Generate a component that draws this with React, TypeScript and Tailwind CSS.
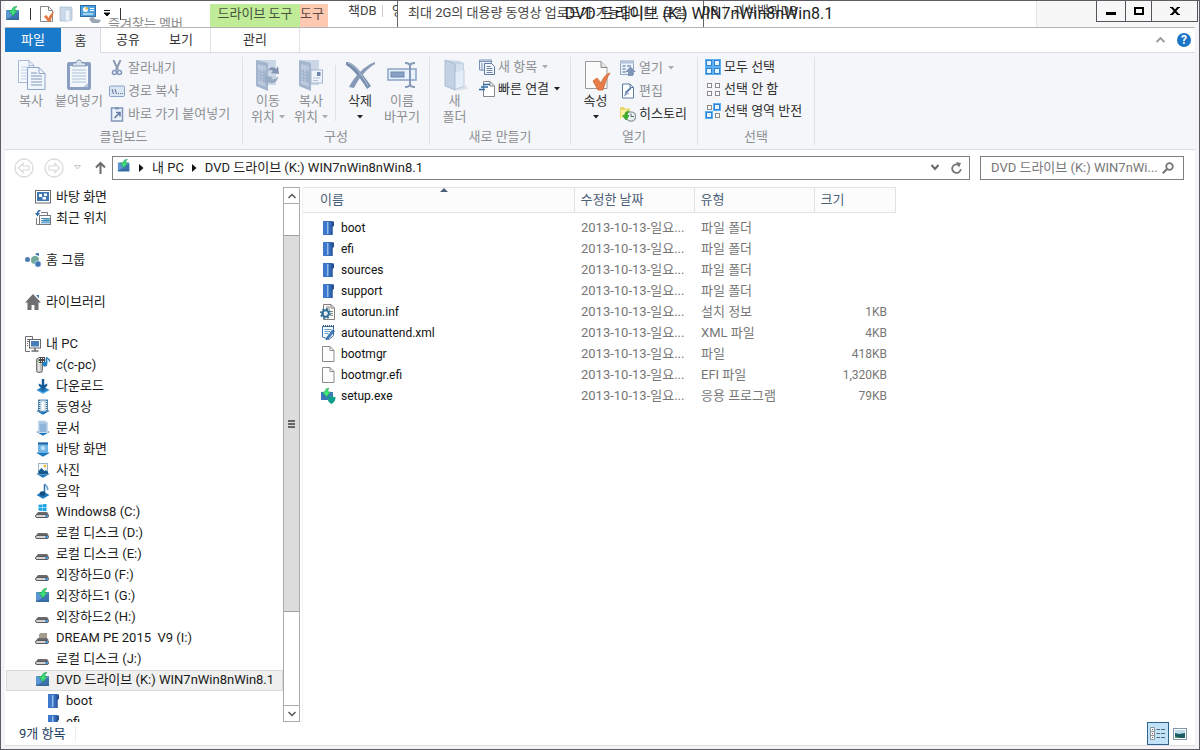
import type { ReactNode } from "react";

/* ---------- small icons ---------- */

const DiscDrive = ({ size = 16 }: { size?: number }) => (
  <svg width={size} height={size} viewBox="0 0 16 16" aria-hidden="true">
    <rect x="1" y="4" width="13" height="10" fill="#5a96d2" />
    <path d="M1 14 14 5v9z" fill="#3d74b0" />
    <rect x="1" y="12.500" width="13" height="1.500" fill="#34648f" opacity=".6" />
    <path d="M12 .5C8.500 .5 7 2 7 4.500H4l4 5.500 4-5.500H9.800c0-1.500.5-3 2.200-4z" fill="#3fe07a" stroke="#1f9c52" strokeWidth=".7" />
  </svg>
);

const Shielded = () => (
  <svg width="16" height="16" viewBox="0 0 16 16" aria-hidden="true">
    <rect x="1" y="4" width="12" height="8" fill="#3f78b8" />
    <path d="M9 0C6 0 5 2 5 4H2.500l4 5 4-5H8c0-2 0-3 1-4z" fill="#46e67c" stroke="#1f9c52" strokeWidth=".6" />
    <path d="M7.500 9c2 0 3-.5 4-1 1 .5 2 1 4 1 0 4-1.500 5.500-4 7-2.500-1.500-4-3-4-7z" fill="#11a08a" />
  </svg>
);

const Folder = () => (
  <svg width="16" height="16" viewBox="0 0 16 16" aria-hidden="true">
    <rect x="3" y="1" width="9.500" height="14" fill="#3468b8" />
    <rect x="3" y="1" width="4" height="14" fill="#3d78cc" />
    <rect x="7" y="2" width="1.500" height="12" fill="#93bdea" />
    <path d="M11.500 1.500H14V6l-1.500 1v8h-1z" fill="#264f90" />
  </svg>
);

const Page = () => (
  <svg width="16" height="16" viewBox="0 0 16 16" aria-hidden="true">
    <path d="M2.500.5h7.500l4 4v11H2.500z M10 .5v4h4" fill="#fdfdfd" stroke="#8c8c8c" />
  </svg>
);

const InfFile = () => (
  <svg width="16" height="16" viewBox="0 0 16 16" aria-hidden="true">
    <path d="M3.500.5H11l3.500 3.500v11.500h-11z M11 .5V4h3.500" fill="#fafafa" stroke="#808080" />
    <path d="M6 3h4M6 5h4M10 7.500h3M10.500 9.500H13M10.500 11.500H13" stroke="#8a8a8a" />
    <circle cx="5.500" cy="9.500" r="3.300" fill="none" stroke="#2c6c93" strokeWidth="2" />
    <circle cx="5.500" cy="9.500" r="4.800" fill="none" stroke="#2c6c93" strokeWidth="1.400" strokeDasharray="1.800 1.970" />
    <circle cx="5.500" cy="9.500" r="1.200" fill="#d8edf7" />
  </svg>
);

const XmlFile = () => (
  <svg width="16" height="16" viewBox="0 0 16 16" aria-hidden="true">
    <path d="M2.500 1.500h11v9L9 14.500 2.500 12z" fill="#f5faff" stroke="#3a6fa8" />
    <path d="M3 1h11" stroke="#355f8c" strokeWidth="2" strokeDasharray="1 1" />
    <path d="M4.500 4.500h7M4.500 6.500h6M4.500 8.500h4" stroke="#6b9cc8" />
    <path d="M14.500 6 9 13l-3 2 1-3 5.500-7z" fill="#3d7fc4" stroke="#245382" strokeWidth=".6" />
  </svg>
);

const DesktopFav = () => (
  <svg width="16" height="16" viewBox="0 0 16 16" aria-hidden="true">
    <rect x=".5" y="1.500" width="15" height="12.500" fill="#fff" stroke="#6b6b70" />
    <rect x="2" y="3" width="12" height="9" fill="#3e76b0" />
    <path d="M4 5h3v3H4zM9 4.500h3V7H9zM7.500 8H11v2.500H7.500z" fill="#fff" />
  </svg>
);

const Recent = () => (
  <svg width="16" height="16" viewBox="0 0 16 16" aria-hidden="true">
    <path d="M6 2.500h6.500V5M1.500 8v6.500H4" fill="none" stroke="#77777c" />
    <rect x="4.500" y="5.500" width="11" height="9" fill="#fff" stroke="#77777c" />
    <path d="M6 12.500 9 9l6-1v5.500H6z" fill="#79b3d6" />
    <path d="M6 8.500h8M6 10.500h8" stroke="#4b89b5" />
    <path d="M5.500.5C3.500.5 2.500 1.500 2.500 3.500" fill="none" stroke="#2e6cad" strokeWidth="1.500" />
    <path d="M0 3h5L2.500 6.500z" fill="#2e6cad" />
  </svg>
);

const HomeGroup = () => (
  <svg width="16" height="16" viewBox="0 0 16 16" aria-hidden="true">
    <circle cx="2.500" cy="7.500" r="2.500" fill="#4a7db2" />
    <circle cx="10" cy="8" r="4" fill="#72a99b" />
    <path d="M10 2.500 11.500 1h2.500v3z" fill="#4a7db2" />
    <circle cx="13" cy="12" r="3.200" fill="#3f77b5" stroke="#fff" strokeWidth=".6" />
  </svg>
);

const House = () => (
  <svg width="16" height="16" viewBox="0 0 16 16" aria-hidden="true">
    <path d="M8 0 0 8.500h2.500V16h4v-5h3v5h4V8.500H16z" fill="#6f6f72" />
    <path d="M11 1h3v3.500z" fill="#3f77b5" />
  </svg>
);

const ThisPc = () => (
  <svg width="16" height="16" viewBox="0 0 16 16" aria-hidden="true">
    <path d="M5 15.500H.5V.5h7V3M2 3.500h4M2 5.500h2M2 7.500h1M2 9.500h1" fill="none" stroke="#707075" />
    <rect x="4.500" y="3.500" width="11" height="8.500" fill="#fff" stroke="#68686d" />
    <rect x="6" y="5" width="8" height="5.500" fill="#4580b8" />
    <path d="M10 12v2.500M6.500 15h7" stroke="#68686d" strokeWidth="1.500" />
  </svg>
);

const MediaPc = () => (
  <svg width="16" height="16" viewBox="0 0 16 16" aria-hidden="true">
    <rect x="1.500" y="1" width="6" height="14.500" rx="2" fill="#bcbcbc" stroke="#747474" />
    <path d="M4 5v9" stroke="#ededed" strokeWidth="1.500" />
    <circle cx="4" cy="3.500" r="1" fill="#58b040" />
    <path d="M4 0h6v6H4z" fill="#4b4b4b" />
    <path d="M4 1.500h6M4 4.500h6" stroke="#eee" strokeDasharray="1 1" />
    <path d="M12 0v7a2.200 2 0 1 1-1-1.500V2zM12 1c3 1 3 2 2.500 4" fill="#2180c4" stroke="#2180c4" strokeWidth=".8" />
  </svg>
);

const Base = () => <path d="M1.500 12 8 8.500l6.500 3.500L8 15.800z" fill="#1d77bc" />;

const Download = () => (
  <svg width="16" height="16" viewBox="0 0 16 16" aria-hidden="true">
    <Base />
    <path d="M6.800 1h2.400v6l3-1.500v2.300L8 12 3.800 7.800V5.500l3 1.500z" fill="#145a94" />
    <path d="M3 12.500 8 15l5-2.500" fill="none" stroke="#5fb8ee" />
  </svg>
);
const Video = () => (
  <svg width="16" height="16" viewBox="0 0 16 16" aria-hidden="true">
    <Base />
    <rect x="3.500" y="1" width="9" height="11.500" fill="#e8f3fb" stroke="#5b8fb8" />
    <path d="M4.500 1v12M11.500 1v12" stroke="#38648a" strokeWidth="1.500" strokeDasharray="1 1" />
    <rect x="6" y="2" width="4" height="10" fill="#fff" stroke="#88adc8" strokeWidth=".6" />
  </svg>
);
const Docs = () => (
  <svg width="16" height="16" viewBox="0 0 16 16" aria-hidden="true">
    <Base />
    <path d="M3.500 1h7l2 2v9.500h-9z" fill="#a8c7e3" stroke="#c4daec" />
    <path d="M5 4h6v8H5z" fill="#8fb5d8" />
  </svg>
);
const Desktop = () => (
  <svg width="16" height="16" viewBox="0 0 16 16" aria-hidden="true">
    <Base />
    <rect x="3" y="1.500" width="10" height="10.500" fill="#6eb3e6" />
    <rect x="3" y="1.500" width="10" height="2" fill="#2566a4" />
    <circle cx="8" cy="7" r="2.500" fill="#a9d6f5" />
    <path d="M7 6.500 8.500 8" stroke="#fff" />
  </svg>
);
const Pictures = () => (
  <svg width="16" height="16" viewBox="0 0 16 16" aria-hidden="true">
    <Base />
    <rect x="3.500" y="1.500" width="9" height="10.500" fill="#f7fbff" stroke="#9bb4c8" />
    <circle cx="10" cy="4" r="1.500" fill="#f0c23c" />
    <path d="M3.500 12V9L6.500 6l3 3 1.500-1 2 2v2z" fill="#155b8f" />
  </svg>
);
const Music = () => (
  <svg width="16" height="16" viewBox="0 0 16 16" aria-hidden="true">
    <Base />
    <path d="M9.500 1v9" stroke="#2b6fae" strokeWidth="1.500" />
    <path d="M10 1c.5 2 3.500 2.500 2.500 6" fill="none" stroke="#5f9bce" strokeWidth="1.500" />
    <ellipse cx="7.500" cy="10.500" rx="2.800" ry="2.300" fill="#124f82" />
  </svg>
);

const HardDisk = ({ windows = false, card = false }: { windows?: boolean; card?: boolean }) => (
  <svg width="16" height="16" viewBox="0 0 16 16" aria-hidden="true">
    {windows && <path d="M3.500.8 7 .4v3H3.500zM7.500.3l4-.3v3.400h-4zM3.500 3.900H7v3l-3.500-.4zM7.500 3.900h4v3.400l-4-.4z" fill="#1ba4e4" />}
    {card && <path d="M5 3h7v5H4V5z" fill="#a39b8c" />}
    <path d="M3 8h9l2 2.500H1z" fill="#6a6a6c" />
    <rect x=".5" y="10.500" width="13" height="3" rx="1.500" fill="#d3d3d4" stroke="#5b5b5d" />
    <rect x="10.500" y="11" width="2" height="2" fill="#1d86d6" />
  </svg>
);

/* ---------- ribbon icons ---------- */

const CopyBig = () => (
  <svg width="32" height="32" viewBox="0 0 32 32" aria-hidden="true">
    <path d="M3.500 1.500H14l5 5v17H3.500z M14 1.500v5h5" fill="#f5f9ff" stroke="#a5b9d6" />
    <path d="M6 8h9M6 11h9M6 14h6M6 17h6M6 20h6" stroke="#c0d0e6" />
    <path d="M12.500 8.500H24l6 6v16H12.500z M24 8.500v6h6" fill="#f1f6fd" stroke="#8fa6c8" />
    <path d="M16 14h6M16 17h11M16 20h11M16 23h11M16 26h11" stroke="#8298b8" />
  </svg>
);
const PasteBig = () => (
  <svg width="32" height="32" viewBox="0 0 32 32" aria-hidden="true">
    <rect x="4" y="3" width="24" height="28" rx="2" fill="#8a9fc2" />
    <path d="M7 7h18v21H7z" fill="#f3f7fc" />
    <path d="M9 11h14M9 14h14M9 17h14M9 20h14M9 23h14" stroke="#adc0d8" />
    <path d="M10 4h3c0-4 6-4 6 0h3l1 3H9z" fill="#d8e2ee" stroke="#8497b2" />
    <path d="M20 28l5-4v4z" fill="#bccbdc" />
  </svg>
);
const Scissors = () => (
  <svg width="16" height="16" viewBox="0 0 16 16" aria-hidden="true">
    <path d="M4.500 0l4.500 10M11.500 0 7 10" stroke="#8a9ab3" strokeWidth="2" fill="none" />
    <circle cx="5.500" cy="12.500" r="2" fill="none" stroke="#8499bb" strokeWidth="1.600" />
    <circle cx="10.500" cy="12.500" r="2" fill="none" stroke="#8499bb" strokeWidth="1.600" />
  </svg>
);
const PathIcon = () => (
  <svg width="16" height="16" viewBox="0 0 16 16" aria-hidden="true">
    <rect x=".5" y="3" width="15" height="10.500" rx="1" fill="#dbe6f4" stroke="#8ba2c4" />
    <path d="M3 6l1.500 5M6 6l1.500 5M9 10.500h1M11 10.500h1M13 10.500h1" stroke="#5d7396" />
  </svg>
);
const ShortcutPaste = () => (
  <svg width="16" height="16" viewBox="0 0 16 16" aria-hidden="true">
    <rect x="2.500" y="2" width="11" height="13" fill="#edf3fb" stroke="#8098bd" strokeWidth="1.500" />
    <path d="M6 1h4v2.500H6z" fill="#8298b8" />
    <path d="M7 6.500h4v4M11 6.500 5.500 12" stroke="#647ca2" strokeWidth="1.600" fill="none" />
  </svg>
);
const LocationBig = ({ copy = false }: { copy?: boolean }) => (
  <svg width="32" height="34" viewBox="0 0 32 34" aria-hidden="true">
    <path d="M4 2h20v25H4z" fill="#cbd7e7" />
    <path d="M4 2l12 3v28L4 28z" fill="#a3b4cd" />
    <path d="M6 6l8 2v5l-8-2zM6 22l8 3v4l-8-3z" fill="#b9c7da" />
    <path d="M7 8v17M10 9v17" stroke="#c8d4e4" strokeDasharray="2 1" />
    {copy ? (
      <g>
        <rect x="16" y="12" width="11.500" height="13" fill="#eef3fa" stroke="#a7b7ce" />
        <rect x="22" y="14" width="3.500" height="4" fill="#6f87ad" />
        <path d="M18 20h7M18 22.500h5" stroke="#b6c4d8" />
      </g>
    ) : (
      <g>
        <path d="M16 13c1-4 5-5 8-2l2-3 1 8-8-1 2-2c-2-1.500-4-1-5 0z" fill="#8395b3" />
        <path d="M26 18c0 6-5 9-10 6l-2 3-1-9 8 1-2 2c3 1 5-.500 7-3z" fill="#98aac4" />
      </g>
    )}
  </svg>
);
const DeleteBig = () => (
  <svg width="32" height="32" viewBox="0 0 32 32" aria-hidden="true">
    <path d="M2 3c7-1 16 11 25 24l-4 3C17 20 10 11 2 6z" fill="#788eae" />
    <path d="M31 3C20 7 10 18 5 28l5 1C15 19 22 10 31 5z" fill="#8699b7" />
    <path d="M4 4c7 2 14 12 20 23" stroke="#b2c0d3" fill="none" />
  </svg>
);
const RenameBig = () => (
  <svg width="32" height="32" viewBox="0 0 32 32" aria-hidden="true">
    <rect x="2" y="10" width="28" height="11" fill="#e9f1fb" stroke="#8ba2c6" strokeWidth="1.500" />
    <rect x="5" y="13" width="13" height="5" fill="#8aa1c5" stroke="#6d87b0" />
    <path d="M19 4c3 0 5 1 5 3 0-2 2-3 5-3M24 6v20M19 28c3 0 5-1 5-3 0 2 2 3 5 3" stroke="#8499b7" strokeWidth="2" fill="none" />
  </svg>
);
const NewFolderBig = () => (
  <svg width="32" height="34" viewBox="0 0 32 34" aria-hidden="true">
    <path d="M20 27l7 1 2 3-13 2z" fill="#d3dae4" opacity=".7" />
    <path d="M6 2l14 1 5 2v23l-9 3z" fill="#c4d3e6" />
    <path d="M15 14l9-3 1 .500v17l-10 3z" fill="#e4edf7" stroke="#b5c4d8" strokeWidth=".8" />
    <path d="M6 2l10 4v26l-10-4z" fill="#c3d1e4" stroke="#a3b6cf" strokeWidth=".8" />
    <path d="M17 6h7v6l-7 3z" fill="#d5e0ee" />
  </svg>
);
const NewItem = () => (
  <svg width="16" height="16" viewBox="0 0 16 16" aria-hidden="true">
    <path d="M.5 1h12v10H.5zM0 2.500h13M3 4v8" fill="#eaf1fa" stroke="#7c93b8" />
    <path d="M5.500 4.500h7l3 3v8h-10z" fill="#f4f8fd" stroke="#5f7aa4" />
    <path d="M7.500 7.500h4M7.500 9.500h6M7.500 11.500h6M7.500 13.500h6" stroke="#7188ad" />
  </svg>
);
const EasyAccess = () => (
  <svg width="16" height="16" viewBox="0 0 16 16" aria-hidden="true">
    <path d="M4.500.5H11L15.500 5v10.500h-11z M11 .5V5h4" fill="#fff" stroke="#85878b" />
    <path d="M4 3.500h7M2 6h7M0 8.500h6" stroke="#2c69a5" strokeWidth="1.400" />
  </svg>
);
const PropertiesBig = () => (
  <svg width="32" height="34" viewBox="0 0 32 34" aria-hidden="true">
    <path d="M5.500 3.500H21l6 6v21H5.500z" fill="#fbfbfb" stroke="#9a9a9a" />
    <path d="M21 3.500v6h6" fill="#e5e5e5" stroke="#8a8a8a" />
    <path d="M13 23l4-3 4 5c2-5 5-9 9-10-3 4-5 10-7 17h-5z" fill="#e77d49" stroke="#d26335" strokeWidth=".8" />
  </svg>
);
const OpenIcon = () => (
  <svg width="16" height="16" viewBox="0 0 16 16" aria-hidden="true">
    <rect x=".5" y="1" width="13" height="13.500" fill="#edf3fa" stroke="#91a4c1" />
    <path d="M0 2.500h14" stroke="#b0c2da" strokeWidth="2" />
    <path d="M2.500 6h3M2.500 9h3M2.500 12h3M7 6h4" stroke="#8197ba" strokeWidth="1.500" />
    <path d="M10.500 6.500 16 12h-3v4H8v-4H5z" fill="#7f95b6" />
  </svg>
);
const EditIcon = () => (
  <svg width="16" height="16" viewBox="0 0 16 16" aria-hidden="true">
    <path d="M2.500 1H10l3.500 3.500V15h-11z M10 1v3.500h3.500" fill="#fff" stroke="#5e7aa3" />
    <path d="M11.500 5.500 7 10l-2.500 2.500 1-4L10 4.500z" fill="#5d7cac" />
    <path d="M4 13l5-3" stroke="#879cc0" />
  </svg>
);
const History = () => (
  <svg width="16" height="16" viewBox="0 0 16 16" aria-hidden="true">
    <path d="M0 1h4l1 1.500h5V12H0z" fill="#ead86b" />
    <path d="M1 4h8v8H1z" fill="#fff2a2" />
    <circle cx="11" cy="10.500" r="4.700" fill="#e8f1f0" stroke="#8c9a9a" strokeWidth="1.300" />
    <path d="M11 7.500v3h3" fill="none" stroke="#566c6c" />
    <path d="M8 5C5 6 4.500 8 5 9.500H2.500L6 14l3-4.500H7.500C7 8 7.500 6.500 9 5.500z" fill="#3bb528" stroke="#258618" strokeWidth=".6" />
  </svg>
);

const SelectGrid = ({ on }: { on: boolean[] }) => (
  <svg width="16" height="16" viewBox="0 0 16 16" aria-hidden="true">
    {on.map((active, i) => {
      const x = (i % 2) * 8;
      const y = Math.floor(i / 2) * 8;
      return active ? (
        <g key={i}>
          <rect x={x} y={y} width="8" height="8" fill="#5fb0f2" />
          <rect x={x + 1.5} y={y + 1.5} width="5" height="5" fill="#e6f5ff" stroke="#2f83d0" />
        </g>
      ) : (
        <rect key={i} x={x + 2.5} y={y + 2.5} width="4" height="4" fill="#fff" stroke="#8b8b8b" />
      );
    })}
  </svg>
);

const Caret = ({ muted = false }: { muted?: boolean }) => (
  <svg width="6" height="4" viewBox="0 0 6 4" aria-hidden="true">
    <path d="M0 0h6L3 3.500z" fill={muted ? "#a9acb1" : "#222"} />
  </svg>
);

/* ---------- ribbon ---------- */

function BigButton({ icon, lines, caret, enabled, className }: {
  icon: ReactNode;
  lines: string[];
  caret?: boolean;
  enabled?: boolean;
  className: string;
}) {
  return (
    <button type="button" className={`flex shrink-0 flex-col items-center whitespace-nowrap ${enabled ? "text-[#333]" : "text-[#8d8f93]"} ${className}`}>
      <span className="flex h-9 items-center">{icon}</span>
      {lines.map((line, i) => (
        <span key={line} className="flex h-4 items-center gap-1">
          {line}
          {caret && i === lines.length - 1 && lines.length > 1 && <Caret muted={!enabled} />}
        </span>
      ))}
      {caret && lines.length === 1 && <span className="flex h-4 items-center"><Caret /></span>}
    </button>
  );
}

function SmallButton({ icon, label, caret, enabled }: { icon: ReactNode; label: string; caret?: boolean; enabled?: boolean }) {
  return (
    <button type="button" className={`flex items-center gap-[3px] whitespace-nowrap ${enabled ? "text-[#333]" : "text-[#8d8f93]"}`}>
      {icon}
      <span className="mr-0.5">{label}</span>
      {caret && <Caret muted={!enabled} />}
    </button>
  );
}

function Group({ label, width, children }: { label: string; width: string; children: ReactNode }) {
  return (
    <section aria-label={label} className={`my-1 flex shrink-0 flex-col border-r border-[#dfe1e4] ${width}`}>
      <div className="flex flex-1">{children}</div>
      <div className="h-4 text-center text-[#8d8f93]">{label}</div>
    </section>
  );
}

function Ribbon() {
  return (
    <div className="flex h-24 shrink-0 bg-[#f4f6f9]">
      <Group label="클립보드" width="w-[238px]">
        <BigButton icon={<CopyBig />} lines={["복사"]} className="w-[52px]" />
        <BigButton icon={<PasteBig />} lines={["붙여넣기"]} className="w-[44px]" />
        <div className="flex flex-col gap-[7px] pt-[3px] pl-2">
          <SmallButton icon={<Scissors />} label="잘라내기" />
          <SmallButton icon={<PathIcon />} label="경로 복사" />
          <SmallButton icon={<ShortcutPaste />} label="바로 가기 붙여넣기" />
        </div>
      </Group>
      <Group label="구성" width="w-[187px]">
        <BigButton icon={<LocationBig />} lines={["이동", "위치"]} caret className="w-[50px]" />
        <BigButton icon={<LocationBig copy />} lines={["복사", "위치"]} caret className="w-[36px]" />
        <div className="mx-1 mt-2 ml-1.5 h-14 w-px bg-[#dfe1e4]" />
        <BigButton icon={<DeleteBig />} lines={["삭제"]} caret enabled className="w-[40px]" />
        <BigButton icon={<RenameBig />} lines={["이름", "바꾸기"]} className="w-[44px]" />
      </Group>
      <Group label="새로 만들기" width="w-[141px]">
        <BigButton icon={<NewFolderBig />} lines={["새", "폴더"]} className="w-[49px]" />
        <div className="flex flex-col gap-1.5 pt-0.5">
          <SmallButton icon={<NewItem />} label="새 항목" caret />
          <SmallButton icon={<EasyAccess />} label="빠른 연결" caret enabled />
        </div>
      </Group>
      <Group label="열기" width="w-[127px]">
        <BigButton icon={<PropertiesBig />} lines={["속성"]} caret enabled className="w-[49px]" />
        <div className="flex flex-col gap-[7px] pt-[3px]">
          <SmallButton icon={<OpenIcon />} label="열기" caret />
          <SmallButton icon={<EditIcon />} label="편집" />
          <SmallButton icon={<History />} label="히스토리" enabled />
        </div>
      </Group>
      <Group label="선택" width="w-[117px]">
        <div className="flex flex-col gap-1.5 pt-0.5 pl-[7px]">
          <SmallButton icon={<SelectGrid on={[true, true, true, true]} />} label="모두 선택" enabled />
          <SmallButton icon={<SelectGrid on={[false, false, false, false]} />} label="선택 안 함" enabled />
          <SmallButton icon={<SelectGrid on={[false, true, true, false]} />} label="선택 영역 반전" enabled />
        </div>
      </Group>
    </div>
  );
}

/* ---------- title bar ---------- */

function TitleBar() {
  return (
    <header className="relative -mr-[3px] flex h-[26px] shrink-0 bg-white">
      <div aria-hidden="true" className="absolute inset-0 overflow-hidden whitespace-nowrap text-[#444]">
        <span className="absolute top-[15px] left-[103px] text-[#8a8a8a]">즐겨찾는 멤버</span>
        <span className="absolute top-0.5 left-[343px]">책DB</span>
        <span className="absolute top-1 left-[377px] h-3 w-px bg-[#c8c8c8]" />
        <span className="absolute top-0.5 left-[387px] w-[5px] overflow-hidden">영</span>
        <span className="absolute top-0 left-[392px] h-full w-px bg-[#66646c]" />
        <span className="absolute top-1 left-[403px]">최대 2G의 대용량 동영상 업로드가 가능합니다. 로컬</span>
        <span className="absolute top-0 left-[698px] h-full w-px bg-[#66646c]" />
        <span className="absolute top-0.5 left-[697px]">DB</span>
        <span className="absolute top-1 left-[719px] h-3 w-px bg-[#c8c8c8]" />
        <span className="absolute top-0.5 left-[728px]">지식백과DB</span>
      </div>
      <div className="flex w-[205px] shrink-0 items-center gap-[9px] pb-px">
        <DiscDrive />
        <span className="h-3 w-px bg-[#333]" />
        <button type="button" aria-label="속성">
          <svg width="18" height="18" viewBox="0 0 18 18" aria-hidden="true">
            <path d="M.5 1.500h8l4 4v11H.5z M8.500 1.500v4h4" fill="#fff" stroke="#888" />
            <path d="M4 11.500 6.500 10l2 3c1-3 3-5 6-6.500-2 3-3 6-4 10H8z" fill="#e6763f" />
          </svg>
        </button>
        <button type="button" aria-label="새 폴더" className="-ml-2">
          <svg width="14" height="16" viewBox="0 0 14 16" aria-hidden="true">
            <path d="M1 1h11l1 1v12l-6 1H1z" fill="#cbd9ea" stroke="#a3b7cf" strokeWidth=".7" />
            <path d="M6 4h5v11H6z" fill="#eaf1f8" stroke="#b2c3d8" strokeWidth=".6" />
          </svg>
        </button>
        <button type="button" aria-label="내 PC 속성" className="-ml-0.5">
          <svg width="22" height="20" viewBox="0 0 22 20" aria-hidden="true">
            <rect x=".5" y="1.500" width="15" height="11" fill="#4da1de" stroke="#2c6da6" />
            <circle cx="5.500" cy="5.500" r="2.500" fill="#fff" />
            <path d="M5.500 5.500V3A2.500 2.500 0 0 1 8 5.500z" fill="#f0ae32" />
            <path d="M10 4.500h4M10 6.500h4M3 10h10" stroke="#fff" />
            <path d="M9 15l4-3 2 3 6 1-2 3h-7z" fill="#9aa6b5" />
          </svg>
        </button>
        <button type="button" aria-label="빠른 실행 도구 모음 사용자 지정" className="-ml-2">
          <svg width="8" height="7" viewBox="0 0 8 7" aria-hidden="true">
            <path d="M1 .5h6M1 3h6L4 6z" stroke="#111" fill="#111" />
          </svg>
        </button>
        <span className="h-3 w-px bg-[#333]" />
      </div>
      <div className="relative mt-[3px] flex w-[90px] shrink-0 items-center justify-center bg-[#c0ec98] pb-1 text-[#47513e]">드라이브 도구</div>
      <div className="relative mt-[3px] flex w-7 shrink-0 items-center overflow-hidden bg-[#fdc9b0] pb-1 text-[#5c4b43]">도구</div>
      <h1 className="relative flex flex-1 items-center justify-center pl-[34px] text-base whitespace-nowrap text-[#222]">DVD 드라이브 (K:) WIN7nWin8nWin8.1</h1>
      <div className="relative flex shrink-0 justify-end border-l border-[#e4e4e4] bg-[#f7f7f7] pl-[59px]">
        <div className="flex h-[21px] border border-t-0 border-[#55535b]">
          <button type="button" aria-label="최소화" className="flex w-7 items-center justify-center">
            <span className="mt-1 h-[3px] w-[10px] bg-black" />
          </button>
          <button type="button" aria-label="최대화" className="flex w-[27px] items-center justify-center border-x border-[#55535b]">
            <span className="h-2 w-[10px] border-2 border-black" />
          </button>
          <button type="button" aria-label="닫기" className="flex w-[45px] items-center justify-center">
            <svg width="10" height="8" viewBox="0 0 10 8" aria-hidden="true">
              <path d="M1.500 0l7 8M8.500 0l-7 8" stroke="#000" strokeWidth="2" />
              <path d="M0 .5h3M7 .5h3M0 7.500h3M7 7.500h3" stroke="#000" />
            </svg>
          </button>
        </div>
      </div>
    </header>
  );
}

function Tabs() {
  return (
    <div className="flex h-[26px] shrink-0 border-t border-[#b5b5b8] bg-white text-[#333]">
      <button type="button" className="mb-px w-14 bg-[#1979ca] text-white">파일</button>
      <div role="tablist" className="flex flex-1 border-b border-[#d9dbde]">
        <button type="button" role="tab" aria-selected="true" className="-mb-px w-10 border-r border-[#d9dbde] bg-[#f4f6f9]">홈</button>
        <button type="button" role="tab" aria-selected="false" className="w-[54px]">공유</button>
        <button type="button" role="tab" aria-selected="false" className="w-[52px]">보기</button>
        <button type="button" role="tab" aria-selected="false" className="ml-[3px] w-[90px] border-x border-[#e2e2e2]">관리</button>
        <div className="ml-auto flex items-center gap-3 pr-1">
          <button type="button" aria-label="리본 최소화">
            <svg width="9" height="6" viewBox="0 0 9 6" aria-hidden="true"><path d="M.5 5l4-4 4 4" fill="none" stroke="#999" strokeWidth="1.800" /></svg>
          </button>
          <button type="button" aria-label="도움말" className="flex size-[14px] items-center justify-center rounded-full bg-[#1b74c5] text-[12px] font-bold leading-none text-white">?</button>
        </div>
      </div>
    </div>
  );
}

/* ---------- address bar ---------- */

const Crumb = () => (
  <svg width="5" height="8" viewBox="0 0 5 8" aria-hidden="true"><path d="M0 0v8l4.500-4z" fill="#111" /></svg>
);

const NavArrow = ({ flip = false }: { flip?: boolean }) => (
  <svg width="20" height="20" viewBox="0 0 20 20" aria-hidden="true" className={flip ? "rotate-180" : ""}>
    <circle cx="10" cy="10" r="9" fill="#fff" stroke="#dadada" strokeWidth="1.300" />
    <path d="M4.500 10 9 5.500V8h6v4H9v2.500z" fill="#fff" stroke="#dadada" strokeWidth="1.200" />
  </svg>
);

function AddressRow() {
  return (
    <div className="flex h-9 shrink-0 items-center border-t border-[#dadcdf] bg-white pr-[11px] pl-[9px]">
      <button type="button" aria-label="뒤로"><NavArrow /></button>
      <button type="button" aria-label="앞으로" className="ml-[10px]"><NavArrow flip /></button>
      <button type="button" aria-label="최근 위치" className="ml-[10px]">
        <svg width="7" height="5" viewBox="0 0 7 5" aria-hidden="true"><path d="M.5.5h6l-3 3.500z" fill="#fff" stroke="#c5c5c5" /></svg>
      </button>
      <button type="button" aria-label="위로" className="ml-[14px]">
        <svg width="11" height="13" viewBox="0 0 11 13" aria-hidden="true"><path d="M5.500 13V2M1 6.500l4.500-4.500L10 6.500" fill="none" stroke="#6d6d6d" strokeWidth="2" /></svg>
      </button>
      <div className="ml-1.5 flex h-6 flex-1 items-center gap-2 border border-[#808083] pl-1 whitespace-nowrap text-[#222]">
        <span className="mb-1"><DiscDrive size={14} /></span>
        <Crumb />
        <a href="#pc">내 PC</a>
        <Crumb />
        <a href="#drive-k">DVD 드라이브 (K:) WIN7nWin8nWin8.1</a>
        <div className="ml-auto flex items-center gap-3 pr-[7px]">
          <button type="button" aria-label="이전 위치">
            <svg width="8" height="7" viewBox="0 0 8 7" aria-hidden="true"><path d="M.5 1 4 5 7.500 1" fill="none" stroke="#666" strokeWidth="2" /></svg>
          </button>
          <button type="button" aria-label="새로 고침">
            <svg width="11" height="12" viewBox="0 0 11 12" aria-hidden="true">
              <path d="M8.500 3.500A4.300 4.300 0 1 0 9.800 7" fill="none" stroke="#777" strokeWidth="1.800" />
              <path d="M5 0l5 1-2 4.500z" fill="#777" />
            </svg>
          </button>
        </div>
      </div>
      <label className="ml-[10px] flex h-6 w-[204px] items-center border border-[#808083] pr-[9px] pl-[10px]">
        <input type="text" aria-label="검색" placeholder="DVD 드라이브 (K:) WIN7nWi..." className="min-w-0 flex-1 outline-none placeholder:text-[#777] placeholder:opacity-100" />
        <svg width="12" height="12" viewBox="0 0 12 12" aria-hidden="true">
          <circle cx="7.500" cy="4.500" r="3.300" fill="none" stroke="#777" strokeWidth="1.800" />
          <path d="M5 7 .8 11.200" stroke="#777" strokeWidth="2.200" />
        </svg>
      </label>
    </div>
  );
}

/* ---------- navigation tree ---------- */

type Node = { icon: ReactNode; label: string; level: 0 | 1 | 2; selected?: boolean } | null;

const tree: Node[] = [
  { icon: <DesktopFav />, label: "바탕 화면", level: 1 },
  { icon: <Recent />, label: "최근 위치", level: 1 },
  null,
  { icon: <HomeGroup />, label: "홈 그룹", level: 0 },
  null,
  { icon: <House />, label: "라이브러리", level: 0 },
  null,
  { icon: <ThisPc />, label: "내 PC", level: 0 },
  { icon: <MediaPc />, label: "c(c-pc)", level: 1 },
  { icon: <Download />, label: "다운로드", level: 1 },
  { icon: <Video />, label: "동영상", level: 1 },
  { icon: <Docs />, label: "문서", level: 1 },
  { icon: <Desktop />, label: "바탕 화면", level: 1 },
  { icon: <Pictures />, label: "사진", level: 1 },
  { icon: <Music />, label: "음악", level: 1 },
  { icon: <HardDisk windows />, label: "Windows8 (C:)", level: 1 },
  { icon: <HardDisk />, label: "로컬 디스크 (D:)", level: 1 },
  { icon: <HardDisk />, label: "로컬 디스크 (E:)", level: 1 },
  { icon: <HardDisk />, label: "외장하드0 (F:)", level: 1 },
  { icon: <DiscDrive />, label: "외장하드1 (G:)", level: 1 },
  { icon: <HardDisk />, label: "외장하드2 (H:)", level: 1 },
  { icon: <HardDisk card />, label: "DREAM PE 2015  V9 (I:)", level: 1 },
  { icon: <HardDisk />, label: "로컬 디스크 (J:)", level: 1 },
  { icon: <DiscDrive />, label: "DVD 드라이브 (K:) WIN7nWin8nWin8.1", level: 1, selected: true },
  { icon: <Folder />, label: "boot", level: 2 },
  { icon: <Folder />, label: "efi", level: 2 },
];

const indent = { 0: "pl-[18px]", 1: "pl-7", 2: "pl-[38px]" };

function Sidebar() {
  return (
    <nav aria-label="탐색 창" className="w-[278px] shrink-0 overflow-hidden">
      <ul>
        {tree.map((node, i) => (
          <li key={i} className="h-[21px]">
            {node && (
              <a
                href="#folder"
                className={`ml-px flex h-full items-center gap-[5px] border pb-px whitespace-pre text-[#1a1a1a] ${indent[node.level]} ${
                  node.selected ? "border-[#d9d9d9] bg-[#f0f0f0]" : "border-transparent"
                }`}
              >
                {node.icon}
                {node.label}
              </a>
            )}
          </li>
        ))}
      </ul>
    </nav>
  );
}

function ScrollBar() {
  return (
    <div className="flex w-[17px] shrink-0 flex-col border border-[#ababab] bg-white">
      <button type="button" aria-label="위로 스크롤" className="flex h-4 items-center justify-center border-b border-[#ababab]">
        <svg width="8" height="6" viewBox="0 0 8 6" aria-hidden="true"><path d="M.5 5 4 1.500 7.500 5" fill="none" stroke="#555" strokeWidth="1.500" /></svg>
      </button>
      <div className="grow-[32]" />
      <div className="flex grow-[376] flex-col items-center justify-center gap-px border-y border-[#a0a0a0] bg-[#dcdcdc]">
        <span className="h-0.5 w-[7px] bg-[#666]" />
        <span className="h-0.5 w-[7px] bg-[#666]" />
        <span className="h-0.5 w-[7px] bg-[#666]" />
      </div>
      <div className="grow-[95]" />
      <button type="button" aria-label="아래로 스크롤" className="flex h-4 items-center justify-center border-t border-[#ababab]">
        <svg width="8" height="6" viewBox="0 0 8 6" aria-hidden="true"><path d="M.5 1 4 4.500 7.500 1" fill="none" stroke="#555" strokeWidth="1.500" /></svg>
      </button>
    </div>
  );
}

/* ---------- file list ---------- */

const files: { icon: ReactNode; name: string; type: string; size: string }[] = [
  { icon: <Folder />, name: "boot", type: "파일 폴더", size: "" },
  { icon: <Folder />, name: "efi", type: "파일 폴더", size: "" },
  { icon: <Folder />, name: "sources", type: "파일 폴더", size: "" },
  { icon: <Folder />, name: "support", type: "파일 폴더", size: "" },
  { icon: <InfFile />, name: "autorun.inf", type: "설치 정보", size: "1KB" },
  { icon: <XmlFile />, name: "autounattend.xml", type: "XML 파일", size: "4KB" },
  { icon: <Page />, name: "bootmgr", type: "파일", size: "418KB" },
  { icon: <Page />, name: "bootmgr.efi", type: "EFI 파일", size: "1,320KB" },
  { icon: <Shielded />, name: "setup.exe", type: "응용 프로그램", size: "79KB" },
];

function FileList() {
  return (
    <main className="ml-0.5 flex-1 overflow-hidden border-l border-[#f3f3f3]">
      <table className="w-[592px] table-fixed border-collapse text-left text-[#777]">
        <colgroup>
          <col className="w-[271px]" />
          <col className="w-[120px]" />
          <col className="w-[120px]" />
          <col className="w-[81px]" />
        </colgroup>
        <thead>
          <tr className="h-[25px] border border-l-0 border-[#e2e2e4] bg-[#fcfcfc] text-[#4c607a]">
            <th scope="col" className="relative border-r border-[#e2e2e4] pl-[17px] font-normal">
              이름
              <svg width="8" height="4" viewBox="0 0 8 4" aria-hidden="true" className="absolute top-0 left-[137px]"><path d="M0 4h8L4 0z" fill="#4c607a" /></svg>
            </th>
            <th scope="col" className="border-r border-[#e2e2e4] pl-[6px] font-normal">수정한 날짜</th>
            <th scope="col" className="border-r border-[#e2e2e4] pl-[6px] font-normal">유형</th>
            <th scope="col" className="pl-[6px] font-normal">크기</th>
          </tr>
        </thead>
        <tbody>
          <tr aria-hidden="true" className="h-[5px]"><td colSpan={4} /></tr>
          {files.map((f) => (
            <tr key={f.name} className="h-[21px]">
              <td className="pl-[17px]">
                <span className="flex items-center gap-[5px] text-xs text-[#111]">{f.icon}{f.name}</span>
              </td>
              <td className="pl-[7px] whitespace-nowrap">2013-10-13-일요...</td>
              <td className="pl-[7px] whitespace-nowrap">{f.type}</td>
              <td className="pr-2 text-right text-xs">{f.size}</td>
            </tr>
          ))}
        </tbody>
      </table>
    </main>
  );
}

function StatusBar() {
  return (
    <footer className="flex h-[23px] shrink-0 items-center justify-between pr-2 pl-[14px] text-[#24405f]">
      <span className="border-r border-[#eee] pr-[10px]">9개 항목</span>
      <div className="flex h-full items-center gap-1">
        <button type="button" aria-label="자세히" aria-pressed="true" className="flex h-full w-[22px] items-center justify-center border border-[#2c628b] bg-[#c2e2f8]">
          <svg width="16" height="13" viewBox="0 0 16 13" aria-hidden="true">
            <path d="M.5.5h4v4h-4zM.5 4.500h4v4h-4zM.5 8.500h4v4h-4z" fill="#fff" stroke="#8b949c" />
            <path d="M2 2h1v1H2zM2 10h1v1H2z" fill="#456" />
            <path d="M2 6h1v1H2z" fill="#c44" />
            <path d="M6.500 2.500H10M11 2.500h4M6.500 6.500H10M11 6.500h4M6.500 10.500H10M11 10.500h4" stroke="#53697d" />
          </svg>
        </button>
        <button type="button" aria-label="큰 아이콘" aria-pressed="false">
          <svg width="14" height="12" viewBox="0 0 14 12" aria-hidden="true">
            <rect x=".5" y=".5" width="13" height="11" fill="#fff" stroke="#8197a8" />
            <path d="M2 2h10v8H2z" fill="#bcdcec" />
            <path d="M2 5l4 1 6-1v5H2z" fill="#1c5c63" />
            <path d="M2 8l5 2H2z" fill="#4f966f" />
          </svg>
        </button>
      </div>
    </footer>
  );
}

export default function App() {
  return (
    <div className="flex h-screen flex-col border border-[#5d5b63] bg-[#f5f3f5] px-1 pb-[3px] font-[Roboto,'Noto_Sans_CJK_KR',sans-serif] text-[13px] leading-4">
      <TitleBar />
      <Tabs />
      <Ribbon />
      <AddressRow />
      <div className="flex min-h-0 flex-1 bg-white pt-0.5">
        <Sidebar />
        <ScrollBar />
        <FileList />
      </div>
      <div className="border-b border-[#dedee0] bg-white">
        <StatusBar />
      </div>
    </div>
  );
}
